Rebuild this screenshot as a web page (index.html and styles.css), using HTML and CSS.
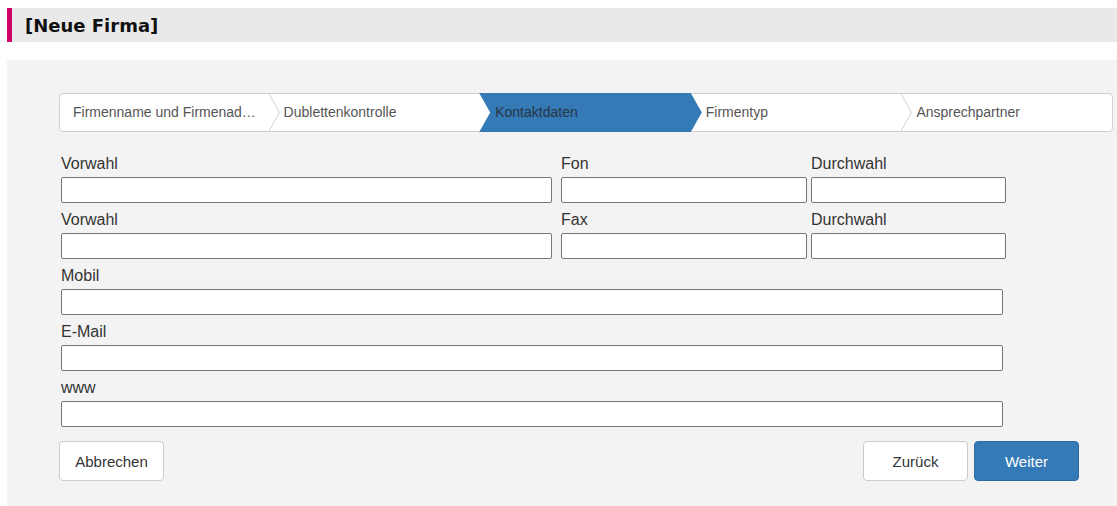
FILE: index.html
```html
<!DOCTYPE html>
<html lang="de">
<head>
<meta charset="utf-8">
<title>Neue Firma</title>
<link rel="stylesheet" href="styles.css">
</head>
<body>
<div class="title-bar"><h1 class="title">[Neue Firma]</h1></div>
<div class="panel">
  <ul class="steps">
    <li class="step"><span class="step-text">Firmenname und Firmenad…</span><svg class="sep" viewBox="0 0 12 39" width="12" height="39"><polyline points="0.5,0 11.5,19.5 0.5,39" fill="#fff" stroke="#d0d0d0" stroke-width="1"/></svg></li>
    <li class="step"><span class="step-text">Dublettenkontrolle</span></li>
    <li class="step active"><span class="step-text">Kontaktdaten</span></li>
    <li class="step"><span class="step-text">Firmentyp</span><svg class="sep" viewBox="0 0 12 39" width="12" height="39"><polyline points="0.5,0 11.5,19.5 0.5,39" fill="#fff" stroke="#d0d0d0" stroke-width="1"/></svg></li>
    <li class="step"><span class="step-text">Ansprechpartner</span></li>
  </ul>
  <form class="form">
    <div class="row">
      <div class="field f-pre"><label class="label">Vorwahl</label><input class="input" type="text"></div>
      <div class="field f-num"><label class="label">Fon</label><input class="input" type="text"></div>
      <div class="field f-ext"><label class="label">Durchwahl</label><input class="input" type="text"></div>
    </div>
    <div class="row">
      <div class="field f-pre"><label class="label">Vorwahl</label><input class="input" type="text"></div>
      <div class="field f-num"><label class="label">Fax</label><input class="input" type="text"></div>
      <div class="field f-ext"><label class="label">Durchwahl</label><input class="input" type="text"></div>
    </div>
    <div class="row">
      <div class="field f-full"><label class="label">Mobil</label><input class="input" type="text"></div>
    </div>
    <div class="row">
      <div class="field f-full"><label class="label">E-Mail</label><input class="input" type="text"></div>
    </div>
    <div class="row">
      <div class="field f-full"><label class="label">www</label><input class="input" type="text"></div>
    </div>
    <div class="actions">
      <button type="button" class="btn">Abbrechen</button>
      <div class="btn-group">
        <button type="button" class="btn">Zurück</button>
        <button type="button" class="btn btn-primary">Weiter</button>
      </div>
    </div>
  </form>
</div>
</body>
</html>
```
FILE: styles.css
```css
html, body {
  margin: 0;
  background: #fff;
}
body {
  padding: 8px 0 0 7px;
  font-family: "Liberation Sans", Arial, sans-serif;
  color: #333;
}
.title-bar {
  height: 34px;
  box-sizing: border-box;
  background: #e9e9e9;
  border-left: 5px solid #d1006b;
  padding: 1px 0 0 13px;
}
.title {
  margin: 0;
  font-family: "DejaVu Sans", Verdana, sans-serif;
  font-weight: bold;
  font-size: 18px;
  line-height: 33px;
  color: #111;
}
.panel {
  margin-top: 18px;
  background: #f3f3f3;
  padding: 33px 4px 25px 52px;
}
.steps {
  display: flex;
  margin: 0;
  padding: 0;
  list-style: none;
  height: 39px;
  box-sizing: border-box;
  border: 1px solid #cfcfcf;
  border-radius: 4px;
  background: #fff;
}
.step {
  flex: 1 1 0;
  position: relative;
  padding-left: 15px;
  line-height: 37px;
  font-size: 14px;
  color: #555;
  white-space: nowrap;
  min-width: 0;
}
.step:first-child {
  padding-left: 13px;
}
.step-text {
  position: relative;
  z-index: 2;
}
.sep {
  position: absolute;
  top: -1px;
  right: -11px;
  z-index: 1;
}
.step.active {
  z-index: 1;
  padding-left: 16px;
}
.step.active::before {
  content: "";
  position: absolute;
  top: -1px;
  bottom: -1px;
  left: 0;
  right: -11px;
  background: #337ab7;
  clip-path: polygon(0 0, calc(100% - 11px) 0, 100% 50%, calc(100% - 11px) 100%, 0 100%, 11px 50%);
}
.step.active .step-text {
  color: #2a3442;
}
.form {
  margin: 22px 0 0 2px;
}
.row {
  display: flex;
  margin-bottom: 7px;
}
.field {
  display: flex;
  flex-direction: column;
}
.label {
  font-size: 16px;
  line-height: 20px;
  margin-bottom: 3px;
  color: #333;
}
.input {
  box-sizing: border-box;
  height: 26px;
  margin: 0;
  padding: 2px 6px;
  border: 1px solid #767676;
  border-radius: 2px;
  background: #fff;
  font: 14px "Liberation Sans", Arial, sans-serif;
}
.f-pre .input { width: 491px; }
.f-pre { margin-right: 9px; }
.f-num .input { width: 246px; }
.f-num { margin-right: 4px; }
.f-ext .input { width: 195px; }
.f-full .input { width: 942px; }
.actions {
  display: flex;
  justify-content: space-between;
  width: 1020px;
  margin: 14px 0 0 -2px;
}
.btn-group {
  display: flex;
  gap: 6px;
}
.btn {
  box-sizing: border-box;
  width: 105px;
  height: 40px;
  margin: 0;
  border: 1px solid #ccc;
  border-radius: 4px;
  background: #fff;
  color: #333;
  font: 15px "Liberation Sans", Arial, sans-serif;
  cursor: pointer;
}
.btn-primary {
  background: #337ab7;
  border-color: #2e6da4;
  color: #fff;
}
```
